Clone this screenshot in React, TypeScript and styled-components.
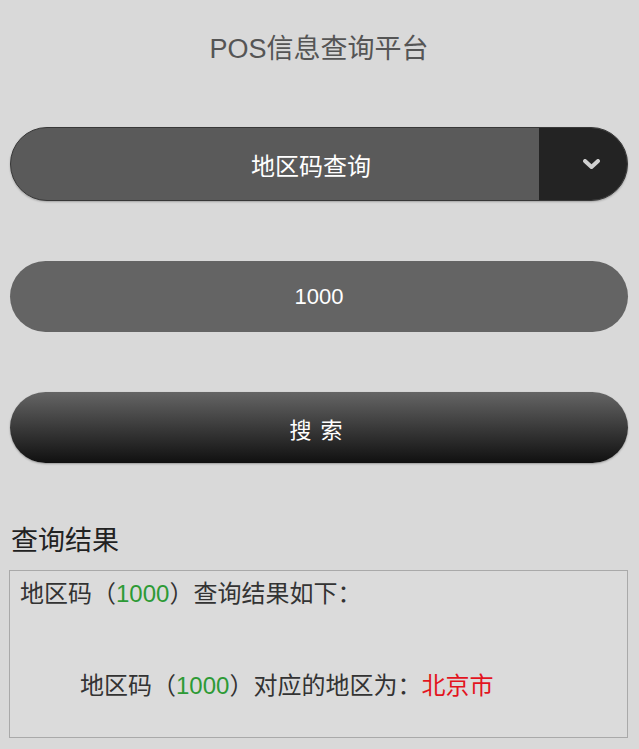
import React from "react";
import styled, { createGlobalStyle } from "styled-components";

const GlobalStyle = createGlobalStyle`
  html, body {
    margin: 0;
    padding: 0;
    background-color: #d9d9d9;
  }
  body {
    font-family: "Liberation Sans", "Noto Sans CJK SC", sans-serif;
  }
`;

const Page = styled.div`
  display: flex;
  flex-direction: column;
  padding: 0 11px 0 10px;
  min-height: 749px;
  box-sizing: border-box;
`;

const Header = styled.div`
  height: 92px;
  display: flex;
  align-items: center;
  justify-content: center;
  font-size: 27px;
  color: #555;
`;

const SelectBox = styled.div`
  margin-top: 35px;
  height: 74px;
  display: flex;
  border-radius: 37px;
  overflow: hidden;
  border: 1px solid #383838;
  box-sizing: border-box;
  background-color: #5a5a5a;
  box-shadow: 0 1px 2px rgba(0, 0, 0, 0.25);
`;

const SelectLabel = styled.div`
  flex: 1;
  display: flex;
  align-items: center;
  justify-content: center;
  padding-left: 72px;
  font-size: 24px;
  color: #fff;
`;

const SelectArrow = styled.div`
  width: 88px;
  display: flex;
  align-items: center;
  justify-content: flex-start;
  padding-left: 44px;
  box-sizing: border-box;
  background-color: #232323;
`;

const InputField = styled.div`
  margin-top: 60px;
  height: 71px;
  border-radius: 36px;
  background-color: #646464;
  display: flex;
  align-items: center;
  justify-content: center;
  font-size: 22px;
  color: #fff;
`;

const SearchButton = styled.button`
  margin-top: 60px;
  height: 71px;
  border: none;
  border-radius: 36px;
  background: linear-gradient(to bottom, #656565 0%, #3a3a3a 50%, #101010 100%);
  box-shadow: 0 1px 2px rgba(0, 0, 0, 0.3);
  font-family: inherit;
  font-size: 22px;
  letter-spacing: 9px;
  padding-left: 9px;
  color: #fff;
  cursor: pointer;
`;

const SectionTitle = styled.div`
  margin-top: 63px;
  font-size: 27px;
  line-height: 31px;
  color: #222;
  padding-left: 1px;
`;

const ResultBox = styled.div`
  margin-top: 13px;
  margin-left: -1px;
  height: 168px;
  box-sizing: border-box;
  border: 1px solid #a9a9a9;
  background-color: #dbdbdb;
  padding: 8px 10px;
  display: flex;
  flex-direction: column;
  gap: 62px;
`;

const ResultLine = styled.div<{ $indent?: number }>`
  font-size: 24px;
  line-height: 30px;
  color: #333;
  padding-left: ${(p) => p.$indent ?? 0}px;
`;

const Code = styled.span`
  color: #2d9a35;
`;

const Region = styled.span`
  color: #e3141e;
`;

const Chevron = () => (
  <svg width="17" height="11" viewBox="0 0 17 11">
    <polyline
      points="2,2 8.5,8 15,2"
      fill="none"
      stroke="#cfcfcf"
      strokeWidth="4"
      strokeLinecap="round"
      strokeLinejoin="round"
    />
  </svg>
);

export default function App() {
  return (
    <>
      <GlobalStyle />
      <Page>
        <Header>POS信息查询平台</Header>
        <SelectBox>
          <SelectLabel>地区码查询</SelectLabel>
          <SelectArrow>
            <Chevron />
          </SelectArrow>
        </SelectBox>
        <InputField>1000</InputField>
        <SearchButton type="button">搜索</SearchButton>
        <SectionTitle>查询结果</SectionTitle>
        <ResultBox>
          <ResultLine>
            地区码（<Code>1000</Code>）查询结果如下：
          </ResultLine>
          <ResultLine $indent={60}>
            地区码（<Code>1000</Code>）对应的地区为：<Region>北京市</Region>
          </ResultLine>
        </ResultBox>
      </Page>
    </>
  );
}
